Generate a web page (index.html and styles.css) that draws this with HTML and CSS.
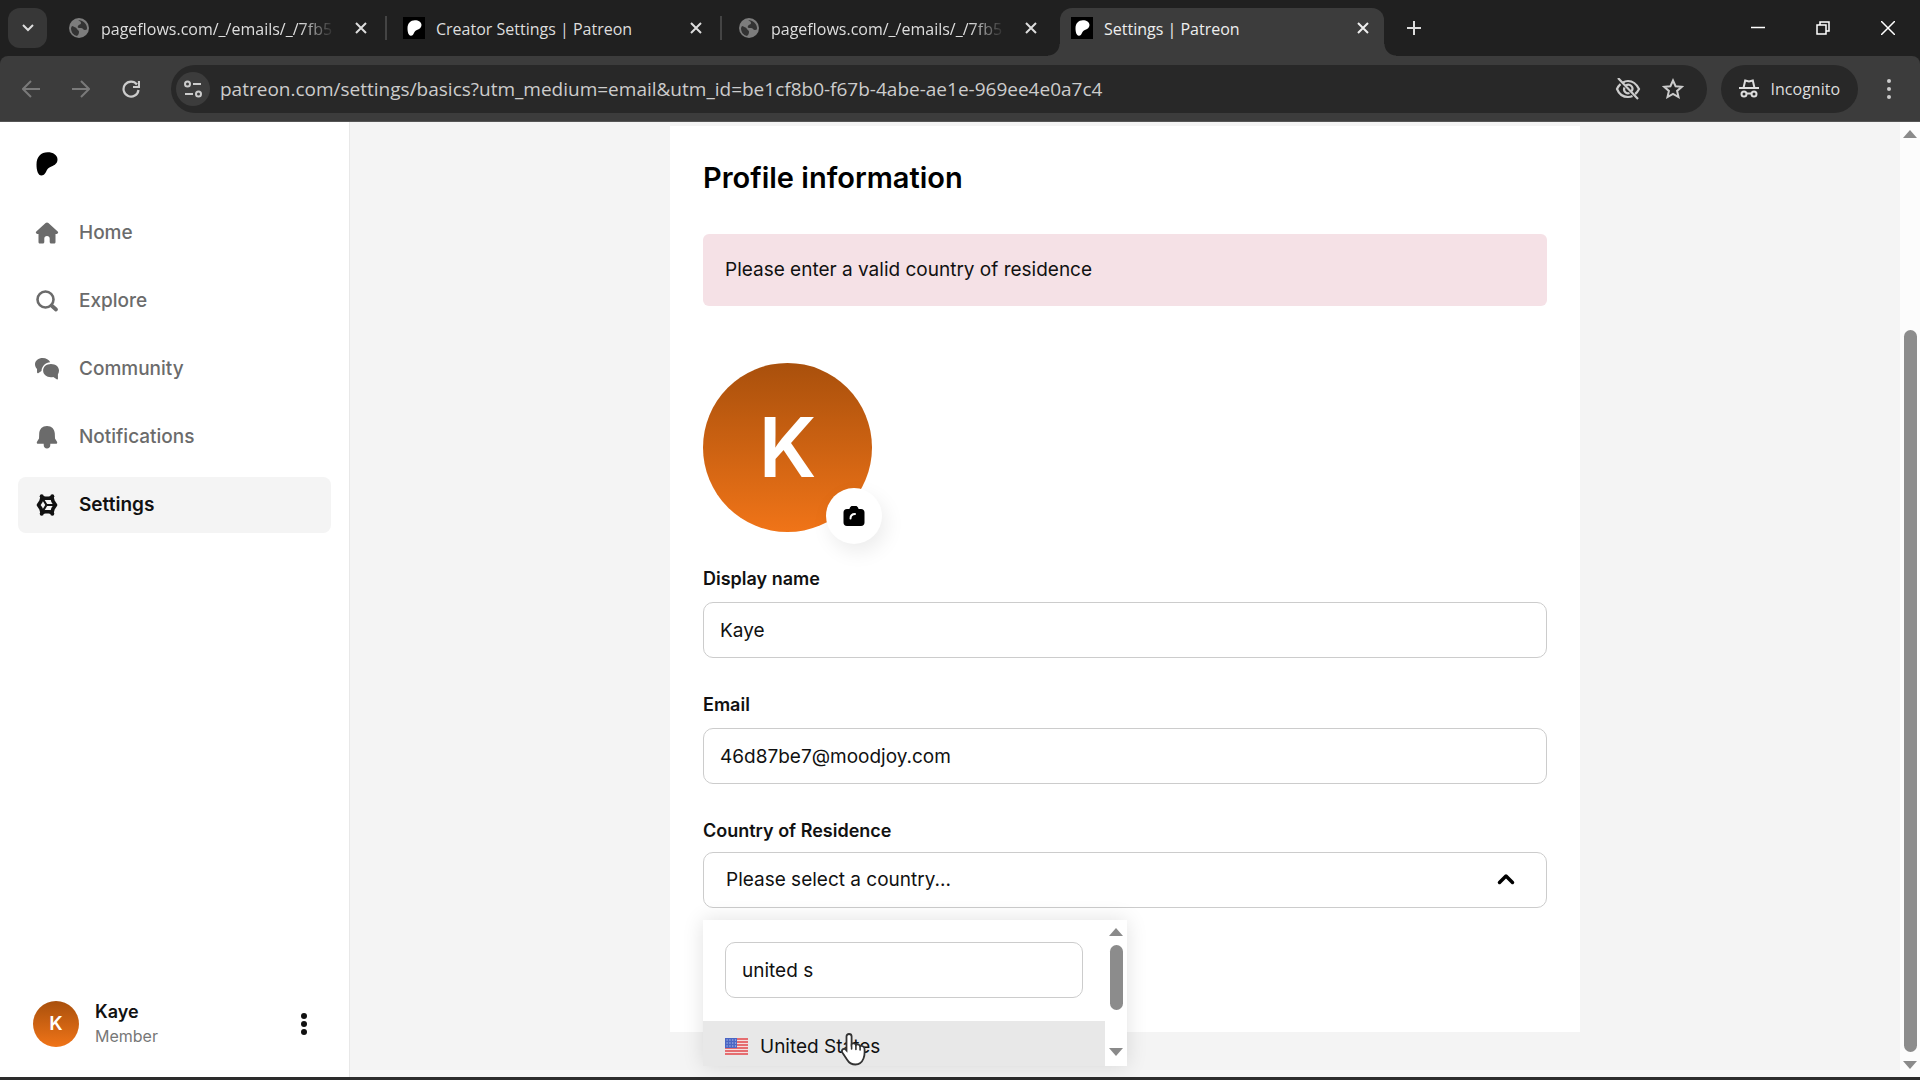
FILE: index.html
```
<!DOCTYPE html>
<html lang="en">
<head>
  <meta charset="UTF-8">
  <title>Settings | Patreon</title>
  <link rel="stylesheet" href="styles.css">
</head>
<body>

<!-- Shared icons -->
<svg class="sprite" aria-hidden="true">
  <symbol id="globe" viewBox="0 0 20 20">
    <circle cx="10" cy="10" r="10" fill="#7d7d7d"/>
    <path d="M3 8c2 1 4 1 5 3s2 1 2 3-1 3-2 4c-4-1-6-4-6-8zM9 2c1 1 3 1 3 3s-2 1-3 3 1 2 3 2 2 2 4 2 2-1 2-2c0-4-4-8-9-8z" fill="#333"/>
  </symbol>
  <symbol id="close" viewBox="0 0 12 12">
    <path d="M1 1l10 10M11 1L1 11" stroke="currentColor" stroke-width="2" fill="none"/>
  </symbol>
  <symbol id="patreon" viewBox="0 0 22 24">
    <path d="M21.500 7.500c0-4.500-4.500-7.200-9.800-7.200C5 .3.500 4.800.500 12.500c0 6 1.500 11 5 11 3 0 4-2.500 5.300-5.200 1-2 2.400-3 4.600-3.800 3.600-1.300 6.100-3.500 6.100-7z" fill="currentColor"/>
  </symbol>
  <symbol id="up" viewBox="0 0 14 8"><path d="M7 0l7 8H0z" fill="#8a8a8a"/></symbol>
  <symbol id="down" viewBox="0 0 14 8"><path d="M0 0h14L7 8z" fill="#8a8a8a"/></symbol>
</svg>

<!-- Browser tabs -->
<header class="tab-strip">
  <button class="tab-search" aria-label="Search tabs">
    <svg width="12" height="8" viewBox="0 0 12 8"><path d="M1 1l5 5 5-5" fill="none" stroke="currentColor" stroke-width="2"/></svg>
  </button>
  <div class="tab">
    <svg class="favicon" width="20" height="20"><use href="#globe"/></svg>
    <span class="tab-title fade">pageflows.com/_/emails/_/7fb5</span>
    <button class="tab-close" aria-label="Close tab"><svg width="12" height="12"><use href="#close"/></svg></button>
  </div>
  <div class="tab">
    <span class="favicon dark"><svg width="15" height="16"><use href="#patreon"/></svg></span>
    <span class="tab-title">Creator Settings | Patreon</span>
    <button class="tab-close" aria-label="Close tab"><svg width="12" height="12"><use href="#close"/></svg></button>
  </div>
  <div class="tab plain">
    <svg class="favicon" width="20" height="20"><use href="#globe"/></svg>
    <span class="tab-title fade">pageflows.com/_/emails/_/7fb5</span>
    <button class="tab-close" aria-label="Close tab"><svg width="12" height="12"><use href="#close"/></svg></button>
  </div>
  <div class="tab active">
    <span class="favicon dark"><svg width="15" height="16"><use href="#patreon"/></svg></span>
    <span class="tab-title">Settings | Patreon</span>
    <button class="tab-close" aria-label="Close tab"><svg width="12" height="12"><use href="#close"/></svg></button>
  </div>
  <button class="new-tab" aria-label="New tab">
    <svg width="14" height="14" viewBox="0 0 14 14"><path d="M7 0v14M0 7h14" stroke="currentColor" stroke-width="2"/></svg>
  </button>
  <div class="window-buttons">
    <button aria-label="Minimize"><svg width="14" height="14" viewBox="0 0 14 14"><path d="M0 6.500h14" stroke="currentColor" stroke-width="1.500"/></svg></button>
    <button aria-label="Restore"><svg width="14" height="14" viewBox="0 0 14 14" fill="none" stroke="currentColor" stroke-width="1.500"><path d="M1 4h9v9H1zM4 4V1h9v9h-3"/></svg></button>
    <button aria-label="Close window"><svg width="14" height="14" viewBox="0 0 14 14"><path d="M0 0l14 14M14 0L0 14" stroke="currentColor" stroke-width="1.500"/></svg></button>
  </div>
</header>

<!-- Address bar -->
<div class="toolbar">
  <button class="tool dim" aria-label="Back"><svg width="18" height="18" viewBox="0 0 18 18" fill="none" stroke="currentColor" stroke-width="2"><path d="M18 9H2M9 1L1 9l8 8"/></svg></button>
  <button class="tool dim" aria-label="Forward"><svg width="18" height="18" viewBox="0 0 18 18" fill="none" stroke="currentColor" stroke-width="2"><path d="M0 9h16M9 1l8 8-8 8"/></svg></button>
  <button class="tool" aria-label="Reload"><svg width="18" height="18" viewBox="0 0 18 18" fill="none" stroke="currentColor" stroke-width="2.200"><path d="M15 4.500A7.500 7.500 0 1 0 16.500 10M17 1v6h-6"/></svg></button>
  <div class="omnibox">
    <button class="site-info" aria-label="Site information"><svg width="18" height="18" viewBox="0 0 18 18" fill="none" stroke="currentColor" stroke-width="2"><circle cx="3.500" cy="4" r="2.500"/><path d="M9 4h8M1 14h8"/><circle cx="14.500" cy="14" r="2.500"/></svg></button>
    <input class="url" type="text" aria-label="Address" value="patreon.com/settings/basics?utm_medium=email&amp;utm_id=be1cf8b0-f67b-4abe-ae1e-969ee4e0a7c4">
    <button class="tool small" aria-label="Third-party cookies blocked"><svg width="26" height="22" viewBox="0 0 26 22" fill="none" stroke="currentColor" stroke-width="2.200"><path d="M8 4.500C9.500 3.500 11 3 13 3c5 0 8.500 3 11 8-1 2-2.200 3.800-3.800 5M17.500 18c-1.400.7-2.900 1-4.500 1-5 0-9-3-11-8 .9-1.900 2-3.500 3.500-4.800M11 7.500a4 4 0 0 1 5.800 5.300M9.500 9.500a4 4 0 0 0 5 5.500M3 0l20 21"/></svg></button>
    <button class="tool small" aria-label="Bookmark this tab"><svg width="22" height="21" viewBox="0 0 22 21" fill="none" stroke="currentColor" stroke-width="2"><path d="M11 2.500l2.600 5.700 6.200.6-4.700 4.100 1.400 6.100-5.500-3.200L5.500 19l1.400-6.100-4.700-4.100 6.200-.6z"/></svg></button>
  </div>
  <button class="incognito">
    <svg width="20" height="19" viewBox="0 0 20 19" fill="none" stroke="currentColor" stroke-width="2"><path d="M0 9h20M4.500 9l1.700-7.500 3.800 1 3.800-1L15.500 9M7.500 14.500h5"/><circle cx="5" cy="15" r="2.500"/><circle cx="15" cy="15" r="2.500"/></svg>
    Incognito
  </button>
  <button class="tool menu" aria-label="Browser menu"><svg width="4" height="20" viewBox="0 0 4 20" fill="currentColor"><circle cx="2" cy="2" r="2"/><circle cx="2" cy="10" r="2"/><circle cx="2" cy="18" r="2"/></svg></button>
</div>

<div class="page">
  <aside class="sidebar">
    <a class="logo" href="#" aria-label="Patreon"><svg width="22" height="24"><use href="#patreon"/></svg></a>
    <nav>
      <a href="#"><svg width="24" height="24" viewBox="0 0 24 24" fill="currentColor"><path d="M10.600 2c.8-.8 2-.8 2.800 0l9.300 8.600c1 1 .3 2.300-1 2.300h-1.200v8c0 1-.7 1.600-1.600 1.600h-2.700c-.9 0-1.500-.6-1.500-1.500v-3.500c0-1.500-1-2.500-2.700-2.500s-2.700 1-2.700 2.500V21c0 .9-.6 1.500-1.500 1.500H5.100c-.9 0-1.600-.6-1.600-1.600v-8H2.300c-1.300 0-2-1.300-1-2.300z"/></svg>Home</a>
      <a href="#"><svg width="24" height="24" viewBox="0 0 24 24" fill="none" stroke="currentColor" stroke-width="2.600"><circle cx="10.500" cy="10.500" r="8"/><path d="M16.500 16.500l4.500 4" stroke-width="3.800" stroke-linecap="round"/></svg>Explore</a>
      <a href="#"><svg width="26" height="24" viewBox="0 0 26 24" fill="currentColor"><path d="M8.300 0C3.900 0 0 2.900 0 6.900c0 2 .8 3.700 2.200 5v3.700c0 .9.900 1.300 1.600.8l3.200-2.200C7.500 8.300 11.500 5 16.500 4.700 15.200 1.700 12 0 8.300 0z"/><path d="M17.300 6.500c-5 0-8.500 3-8.500 7.200s3.500 7.200 8.500 7.200c.9 0 1.700-.1 2.500-.3l3.700 2.500c.7.500 1.400 0 1.400-.8l-.1-4.400c.8-1.200 1.200-2.600 1.200-4.200 0-4.200-3.700-7.200-8.700-7.200z"/></svg>Community</a>
      <a href="#"><svg width="24" height="24" viewBox="0 0 24 24" fill="currentColor"><path d="M12 1c-4.700 0-7.500 3-7.800 7.500L4 13.500l-2 3.200c-.6 1 0 2.100 1.200 2.100h5.500V20c0 2 1.300 3.500 3.300 3.500s3.300-1.500 3.300-3.500v-1.200h5.500c1.200 0 1.800-1.100 1.200-2.100l-2-3.200-.2-5C19.500 4 16.700 1 12 1z"/></svg>Notifications</a>
      <a class="current" href="#"><svg width="24" height="24" viewBox="0 0 24 24" fill="none" stroke="currentColor"><path d="M7 4.500L10 5.300h4l3-.8 1 3.700 2.500 3.800-2.500 3.800-1 3.700-3-.8h-4l-3 .8-1-3.700L3.500 12 6 8.200z" stroke-width="3.600" stroke-linejoin="round"/><path d="M11.500 12H19M11.500 12L7.500 5.500M11.500 12l-4 6.500" stroke-width="2.200"/><circle cx="6.700" cy="3.200" r="2" fill="currentColor" stroke="none"/><circle cx="17.300" cy="3.200" r="2" fill="currentColor" stroke="none"/><circle cx="6.700" cy="20.800" r="2" fill="currentColor" stroke="none"/><circle cx="17.300" cy="20.800" r="2" fill="currentColor" stroke="none"/></svg>Settings</a>
    </nav>
    <div class="account">
      <span class="avatar">K</span>
      <div class="account-text">
        <strong>Kaye</strong>
        <span>Member</span>
      </div>
      <button class="more" aria-label="Account menu"><svg width="6" height="22" viewBox="0 0 6 22" fill="currentColor"><circle cx="3" cy="3" r="3"/><circle cx="3" cy="11" r="3"/><circle cx="3" cy="19" r="3"/></svg></button>
    </div>
  </aside>

  <main>
    <form class="card">
      <h1>Profile information</h1>
      <p class="alert" role="alert">Please enter a valid country of residence</p>

      <div class="photo">
        <span class="avatar large">K</span>
        <button class="camera" type="button" aria-label="Change photo">
          <svg width="22" height="20" viewBox="0 0 22 20"><path d="M7 1.500C7.500.600 8.200 0 9.200 0h3.600c1 0 1.700.600 2.200 1.500L15.600 3H18c2.200 0 3.500 1.300 3.500 3.500v10c0 2.200-1.300 3.500-3.500 3.500H4c-2.200 0-3.500-1.300-3.500-3.500v-10C.500 4.300 1.800 3 4 3h2.400z" fill="#000"/><path d="M7.500 12.500c0-3 1.500-4.500 4.500-4.500" fill="none" stroke="#fff" stroke-width="2" stroke-linecap="round"/></svg>
        </button>
      </div>

      <div class="field">
        <label for="displayName">Display name</label>
        <input type="text" id="displayName" value="Kaye">
      </div>
      <div class="field">
        <label for="email">Email</label>
        <input type="email" id="email" value="46d87be7@moodjoy.com">
      </div>
      <div class="field country">
        <label for="country">Country of Residence</label>
        <div class="select-box">
          <select id="country">
            <option>Please select a country...</option>
            <option>United States</option>
          </select>
          <svg class="chevron" width="18" height="12" viewBox="0 0 18 12"><path d="M2.500 9.500L9 3l6.500 6.500" fill="none" stroke="#000" stroke-width="3.500" stroke-linecap="round" stroke-linejoin="round"/></svg>

          <!-- Open country list -->
          <div class="dropdown">
            <div class="dropdown-list">
              <div class="dropdown-search">
                <input type="text" aria-label="Search countries" value="united s">
              </div>
              <button class="option" type="button">
                <svg width="23" height="17" viewBox="0 0 23 17"><path fill="#f4dede" d="M0 0h23v17H0z"/><path d="M0 1h23M0 4h23M0 7h23M0 10h23M0 13h23M0 16h23" stroke="#e0484c" stroke-width="1.600"/><path fill="#4a66c4" d="M0 0h12v10H0z"/><path d="M1.500 2h10M1.500 5h10M1.500 8h10" stroke="#c3cdf0" stroke-width="1.200" stroke-dasharray="1.200 1.600"/></svg>
                United States
              </button>
            </div>
            <div class="dropdown-scroll">
              <svg width="14" height="8"><use href="#up"/></svg>
              <span class="thumb"></span>
              <svg width="14" height="8"><use href="#down"/></svg>
            </div>
            <svg class="pointer" width="26" height="34" viewBox="0 0 26 34"><path d="M8 2c1.500 0 2.600 1 2.600 2.500V12c.6-.8 3.800-.9 4.300.9 1.200-.8 3.800-.5 4.200 1.200 1.500-.6 4.200.2 4.400 2.600.3 3.800.2 7-1 9.800-1.400 3.500-3.500 6-8 6-4 0-6.400-1.500-8.200-4.500l-5-7.600c-.8-1.300-.3-2.700.8-3.300 1.200-.6 2.300-.1 3.400 1.200V4.500C5.500 3 6.500 2 8 2z" fill="#fff" stroke="#333" stroke-width="1.800"/><path d="M10.600 12v5M14.900 13v4.500M19.100 14v4" stroke="#333" stroke-width="1.600" stroke-linecap="round"/></svg>
          </div>
        </div>
      </div>
    </form>
  </main>

  <div class="page-scroll">
    <svg width="14" height="8"><use href="#up"/></svg>
    <span class="track"></span>
    <span class="thumb"></span>
    <svg width="14" height="8"><use href="#down"/></svg>
  </div>
</div>

</body>
</html>
```
FILE: styles.css
```
* {
  box-sizing: border-box;
}

body {
  margin: 0;
  height: 100vh;
  display: flex;
  flex-direction: column;
  overflow: hidden;
  font-family: Inter, "Liberation Sans", sans-serif;
  font-size: 19px;
  line-height: 24px;
  color: #111;
  background-color: #202020;
}

button, input, select {
  font: inherit;
  color: inherit;
}

button {
  display: flex;
  align-items: center;
  justify-content: center;
  padding: 0;
  border: none;
  background: none;
  cursor: pointer;
}

svg {
  flex-shrink: 0;
}

.sprite {
  position: absolute;
  width: 0;
  height: 0;
}

/* Browser tabs */
.tab-strip {
  display: flex;
  align-items: flex-end;
  height: 56px;
  flex-shrink: 0;
  padding-left: 8px;
  color: #ddd;
  font-family: "Open Sans", "Noto Sans", sans-serif;
  font-size: 16px;
}

.tab-search {
  width: 39px;
  height: 40px;
  margin-bottom: 8px;
  border-radius: 12px;
  background-color: #373737;
}

.tab {
  display: flex;
  align-items: center;
  flex: 0 1 335px;
  height: 40px;
  margin-bottom: 8px;
  padding: 0 16px;
  background: linear-gradient(#444, #444) right / 2px 24px no-repeat;
}

.tab-search + .tab {
  flex-basis: 340px;
  padding-left: 21px;
}

.tab.plain {
  margin-right: 3px;
  background: none;
}

.tab.active {
  position: relative;
  flex-basis: 324px;
  height: 48px;
  margin-bottom: 0;
  padding: 0 11px 8px;
  border-radius: 12px 12px 0 0;
  background: #3c3c3c;
  color: #eee;
}

/* Curved feet of the active tab */
.tab.active::before,
.tab.active::after {
  content: "";
  position: absolute;
  bottom: 0;
  width: 12px;
  height: 12px;
}

.tab.active::before {
  right: 100%;
  background: radial-gradient(circle at 0 0, transparent 11px, #3c3c3c 12px);
}

.tab.active::after {
  left: 100%;
  background: radial-gradient(circle at 100% 0, transparent 11px, #3c3c3c 12px);
}

.favicon {
  width: 22px;
  height: 22px;
  padding: 1px;
}

.favicon.dark {
  display: flex;
  align-items: center;
  justify-content: center;
  background-color: #000;
  color: #fff;
}

.tab-title {
  flex: 1;
  margin: 0 16px 0 11px;
  padding-top: 2px;
  overflow: hidden;
  white-space: nowrap;
}

.tab-title.fade {
  mask-image: linear-gradient(to right, #000 85%, transparent);
}

.tab-close {
  width: 20px;
  height: 20px;
}

.new-tab {
  width: 40px;
  height: 40px;
  margin: 0 auto 8px 10px;
}

.window-buttons {
  display: flex;
}

.window-buttons button {
  width: 65px;
  height: 56px;
  color: #fff;
}

/* Address bar */
.toolbar {
  display: flex;
  align-items: center;
  height: 66px;
  flex-shrink: 0;
  padding: 0 6px;
  background-color: #3c3c3c;
  border-bottom: 1px solid #555;
  border-radius: 8px 8px 0 0;
  color: #ccc;
  font-family: "Open Sans", "Noto Sans", sans-serif;
}

.tool {
  width: 50px;
  height: 40px;
}

.tool.dim {
  color: #7a7a7a;
}

.tool.small {
  width: 45px;
}

.omnibox {
  display: flex;
  align-items: center;
  flex: 1;
  height: 48px;
  margin-left: 15px;
  padding: 0 11px 0 5px;
  border-radius: 24px;
  background-color: #282828;
}

.site-info {
  width: 34px;
  height: 34px;
  border-radius: 17px;
  background-color: #3c3c3c;
}

.url {
  flex: 1;
  padding: 0 10px;
  border: none;
  background: none;
}

.incognito {
  gap: 12px;
  height: 48px;
  margin: 0 6px 0 14px;
  padding: 0 18px;
  border-radius: 24px;
  background-color: #282828;
  color: #ddd;
  font-size: 16px;
}

/* Page */
.page {
  display: flex;
  flex: 1;
  min-height: 0;
  border-bottom: 3px solid #2c2c2c;
}

.sidebar {
  display: flex;
  flex-direction: column;
  width: 350px;
  padding: 30px 18px 29px;
  border-right: 1px solid #e8e8e8;
  background-color: #fff;
}

.logo {
  margin-left: 18px;
  height: 24px;
  color: #000;
}

nav {
  display: flex;
  flex-direction: column;
  gap: 12px;
  margin-top: 29px;
}

nav a {
  display: flex;
  align-items: center;
  gap: 20px;
  height: 56px;
  padding: 0 17px;
  border-radius: 8px;
  color: #6b6b6b;
  font-weight: 500;
  text-decoration: none;
}

nav svg {
  width: 24px;
}

nav .current {
  background-color: #f4f4f4;
  color: #111;
  font-weight: 600;
}

.account {
  display: flex;
  align-items: center;
  gap: 16px;
  margin-top: auto;
  padding: 0 24px 0 15px;
}

.avatar {
  display: flex;
  align-items: center;
  justify-content: center;
  width: 46px;
  height: 46px;
  border-radius: 50%;
  background: linear-gradient(#a9500c, #f07418);
  color: #fff;
  font-weight: 600;
}

.account-text {
  display: flex;
  flex: 1;
  flex-direction: column;
}

.account-text strong {
  font-size: 18px;
  font-weight: 600;
}

.account-text span {
  color: #777;
  font-size: 16px;
}

main {
  flex: 1;
  padding-top: 4px;
  background-color: #f4f4f4;
}

.card {
  max-width: 910px;
  height: 906px;
  margin: 0 auto;
  padding: 34px 33px;
  background-color: #fff;
}

h1 {
  margin: 0 0 38px;
  color: #000;
  font-size: 29px;
  font-weight: 600;
  line-height: 36px;
}

.alert {
  margin: 0;
  padding: 24px 22px;
  border-radius: 6px;
  background-color: #f5e1e6;
}

.photo {
  position: relative;
  width: 169px;
  margin: 57px 0 35px;
}

.avatar.large {
  width: 169px;
  height: 169px;
  font-size: 82px;
}

.camera {
  position: absolute;
  right: -10px;
  bottom: -12px;
  width: 56px;
  height: 56px;
  border-radius: 28px;
  background-color: #fff;
  box-shadow: 4px 8px 20px rgba(0, 0, 0, 0.08);
}

.field {
  margin-bottom: 35px;
}

label {
  display: block;
  margin-bottom: 11px;
  font-size: 18px;
  font-weight: 600;
}

.country label {
  margin-bottom: 9px;
}

.field input, select {
  display: block;
  width: 100%;
  height: 56px;
  padding: 0 16px;
  border: 1px solid #ccc;
  border-radius: 10px;
  background-color: #fff;
}

select {
  padding: 0 22px;
  appearance: none;
}

.select-box {
  position: relative;
}

.chevron {
  position: absolute;
  top: 21px;
  right: 32px;
}

.dropdown {
  position: absolute;
  top: 68px;
  left: 0;
  display: flex;
  width: 424px;
  background-color: #fff;
  box-shadow: 0 0 20px rgba(0, 0, 0, 0.12);
}

.dropdown-list {
  flex: 1;
}

.dropdown-search {
  padding: 22px 22px 23px;
}

.option {
  justify-content: flex-start;
  gap: 12px;
  width: 100%;
  height: 45px;
  padding: 6px 0 0 22px;
  background-color: #e8e8e8;
}

.dropdown-scroll {
  display: flex;
  flex-direction: column;
  align-items: center;
  width: 22px;
  padding: 8px 0 10px;
}

.dropdown-scroll .thumb {
  height: 65px;
  margin: 9px 0 auto;
}

.thumb {
  width: 13px;
  border-radius: 7px;
  background-color: #8c8c8c;
}

.pointer {
  position: absolute;
  left: 138px;
  bottom: 0;
}

.page-scroll {
  display: flex;
  flex-direction: column;
  align-items: center;
  width: 20px;
  padding: 8px 0;
  background-color: #fcfcfc;
}

.track {
  flex: 4;
}

.page-scroll .thumb {
  flex: 15;
  margin-bottom: 9px;
}
```
